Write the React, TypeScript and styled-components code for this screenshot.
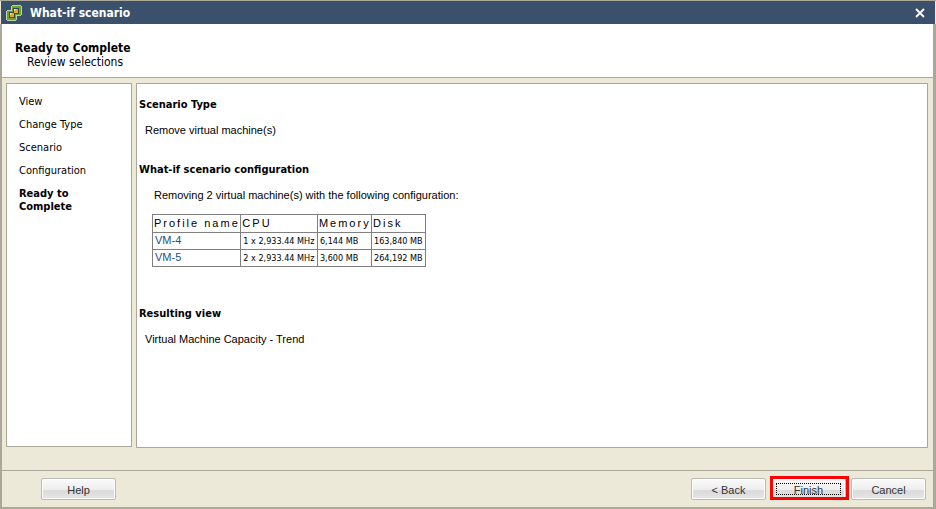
import React from "react";
import styled, { createGlobalStyle } from "styled-components";

const edge = "#aca899";
const face = "#ece9d8";

const GlobalStyle = createGlobalStyle`
  * { box-sizing: border-box; }
  body {
    margin: 0;
    background: ${face};
    color: #000;
    font: 11px/13px "DejaVu Sans Condensed", "Noto Sans", Tahoma, sans-serif;
  }
  h1, h2, h3, p, ol { margin: 0; padding: 0; font-size: inherit; }
`;

const Dialog = styled.div`
  display: flex;
  flex-direction: column;
  min-height: 100vh;
  background: ${face};
  border-top: 1px solid ${edge};
  border-bottom: 2px solid ${edge};
`;

const TitleBar = styled.header`
  display: flex;
  align-items: center;
  gap: 8px;
  height: 23px;
  margin: 0 1px;
  padding: 0 10px 0 5px;
  background: #3b516b;
  color: #fff;
`;

const Title = styled.h1`
  flex: 1;
  font-size: 12px;
  line-height: 16px;
`;

const CloseButton = styled.button`
  display: flex;
  padding: 0;
  border: 0;
  background: none;
`;

const Frame = styled.div`
  flex: 1;
  display: flex;
  flex-direction: column;
  border-left: 2px solid ${edge};
  border-right: 3px solid ${edge};
`;

const Intro = styled.div`
  height: 54px;
  padding: 17px 13px 0;
  background: #fff;
  border-bottom: 1px solid ${edge};
  line-height: 14px;
  font-size: 12px;
`;

const Subtitle = styled.p`
  padding-left: 12px;
`;

const Body = styled.div`
  flex: 1;
  display: grid;
  grid-template-columns: 126px 1fr;
  gap: 4px;
  padding: 5px 5px 22px 4px;
`;

const Panel = styled.div`
  background: #fff;
  border: 1px solid ${edge};
`;

const StepsPanel = styled(Panel)`
  margin-bottom: 1px;
  padding: 11px 12px;
`;

const Steps = styled.ol`
  display: flex;
  flex-direction: column;
  gap: 10px;
  list-style: none;
`;

const Step = styled.li<{ $current?: boolean }>`
  width: 80px;
  font-weight: ${(p) => (p.$current ? "bold" : "normal")};
`;

const Review = styled(Panel)`
  display: flex;
  flex-direction: column;
  gap: 26px;
  padding: 14px 2px;
`;

const Section = styled.section`
  display: flex;
  flex-direction: column;
  gap: 13px;
`;

const Detail = styled.p<{ $indent?: boolean }>`
  padding-left: ${(p) => (p.$indent ? 15 : 6)}px;
  font-family: "Liberation Sans", Arial, sans-serif;
`;

const ConfigTable = styled.table`
  width: 274px;
  margin: -1px 0 14px 13px;
  border-collapse: collapse;
  th, td {
    padding: 0 2px;
    border: 1px solid #808080;
    text-align: left;
    white-space: nowrap;
  }
  th {
    height: 18px;
    padding: 0 0 0 1px;
    font-family: "Liberation Sans", Arial, sans-serif;
    font-weight: normal;
    letter-spacing: 2px;
  }
  td {
    height: 17px;
    font-size: 9px;
  }
`;

const Name = styled.span`
  color: #254f83;
  font: 11px/13px "Liberation Sans", Arial, sans-serif;
`;

const Footer = styled.footer`
  display: flex;
  justify-content: space-between;
  padding: 7px 7px 7px 39px;
  border-top: 1px solid ${edge};
`;

const Group = styled.div`
  display: flex;
  gap: 5px;
`;

const Button = styled.button`
  width: 75px;
  height: 22px;
  padding: 2px 0 0;
  border: 1px solid #b9b9b5;
  border-radius: 2px;
  background: linear-gradient(#fafafa, #ededed 54%, #dadada 58%, #e6e6e6);
  box-shadow: inset 0 0 0 1px #fff;
  color: #333;
  font: 11px/18px "Liberation Sans", Arial, sans-serif;
`;

const DefaultButton = styled(Button)`
  position: relative;
  outline: 1px dotted #000;
  outline-offset: -6px;
  &::after {
    content: "";
    position: absolute;
    inset: -3px -4px -1px -2px;
    border: 3px solid #f00;
  }
`;

function ProductIcon() {
  return (
    <svg width="16" height="16" viewBox="0 0 16 16" shapeRendering="crispEdges" aria-hidden="true">
      <path d="M6 0h9v1h1v9h-1v1h-4v4h-1v1H1v-1H0V6h1V5h4V1h1z" fill="#bccfb0" />
      <path d="M6 1h9v9h-5v5H1V6h5z" fill="#69a81f" />
      <path d="M8 3h5v5H8v5H3V8h5z" fill="#30475f" />
      <path d="M7 3h6v6H9v4H3V7h4z" fill="#30475f" />
      <path d="M8 4h4v4H8zM4 8h4v4H4z" fill="#f0a410" />
      <path d="M8 4h2v1H9v1H8zM4 8h2v1H5v1H4z" fill="#ffe08a" />
    </svg>
  );
}

const steps = ["View", "Change Type", "Scenario", "Configuration", "Ready to Complete"];

const machines = [
  { name: "VM-4", cpu: "1 x 2,933.44 MHz", memory: "6,144 MB", disk: "163,840 MB" },
  { name: "VM-5", cpu: "2 x 2,933.44 MHz", memory: "3,600 MB", disk: "264,192 MB" },
];

export default function App() {
  return (
    <>
      <GlobalStyle />
      <Dialog role="dialog" aria-labelledby="title">
        <TitleBar>
          <ProductIcon />
          <Title id="title">What-if scenario</Title>
          <CloseButton aria-label="Close">
            <svg width="10" height="10" viewBox="0 0 10 10">
              <path d="M1 1l8 8M9 1L1 9" stroke="#fff" strokeWidth="1.8" />
            </svg>
          </CloseButton>
        </TitleBar>
        <Frame>
          <Intro>
            <h2>Ready to Complete</h2>
            <Subtitle>Review selections</Subtitle>
          </Intro>
          <Body>
            <StepsPanel as="nav">
              <Steps>
                {steps.map((s, i) => (
                  <Step key={s} $current={i === steps.length - 1}>{s}</Step>
                ))}
              </Steps>
            </StepsPanel>
            <Review as="main">
              <Section>
                <h3>Scenario Type</h3>
                <Detail>Remove virtual machine(s)</Detail>
              </Section>
              <Section>
                <h3>What-if scenario configuration</h3>
                <Detail $indent>Removing 2 virtual machine(s) with the following configuration:</Detail>
                <ConfigTable>
                  <thead>
                    <tr>
                      <th>Profile name</th>
                      <th>CPU</th>
                      <th>Memory</th>
                      <th>Disk</th>
                    </tr>
                  </thead>
                  <tbody>
                    {machines.map((m) => (
                      <tr key={m.name}>
                        <td><Name>{m.name}</Name></td>
                        <td>{m.cpu}</td>
                        <td>{m.memory}</td>
                        <td>{m.disk}</td>
                      </tr>
                    ))}
                  </tbody>
                </ConfigTable>
              </Section>
              <Section>
                <h3>Resulting view</h3>
                <Detail>Virtual Machine Capacity - Trend</Detail>
              </Section>
            </Review>
          </Body>
          <Footer>
            <Button>Help</Button>
            <Group>
              <Button>&lt; Back</Button>
              <DefaultButton>Finish</DefaultButton>
              <Button>Cancel</Button>
            </Group>
          </Footer>
        </Frame>
      </Dialog>
    </>
  );
}
